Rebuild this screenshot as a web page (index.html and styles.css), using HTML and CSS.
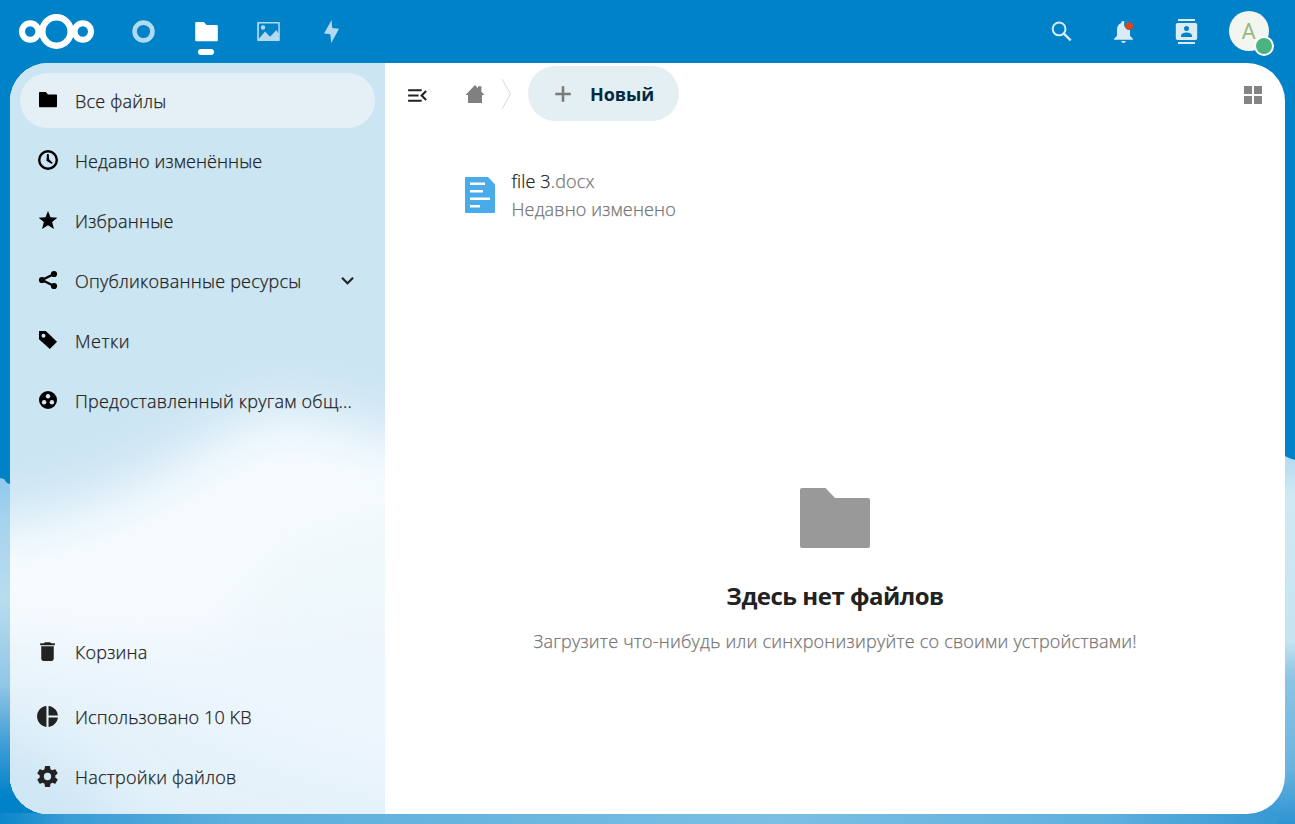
FILE: index.html
```html
<!DOCTYPE html>
<html lang="ru">
<head>
<meta charset="utf-8">
<title>Файлы</title>
<link rel="stylesheet" href="styles.css">
</head>
<body>
<svg class="sky" viewBox="0 0 1295 824" aria-hidden="true">
  <defs>
    <linearGradient id="skyLeft" x1="0" y1="478" x2="0" y2="824" gradientUnits="userSpaceOnUse">
      <stop offset="0" stop-color="#8fcaed"/><stop offset=".12" stop-color="#a6d3ed"/><stop offset=".35" stop-color="#b8ddef"/><stop offset=".6" stop-color="#90c6e6"/><stop offset=".76" stop-color="#43a0d8"/><stop offset=".92" stop-color="#0082c9"/>
    </linearGradient>
    <linearGradient id="skyRight" x1="0" y1="457" x2="0" y2="824" gradientUnits="userSpaceOnUse">
      <stop offset="0" stop-color="#b3daf0"/><stop offset=".1" stop-color="#d0e8f4"/><stop offset=".5" stop-color="#c6e3f1"/><stop offset=".6" stop-color="#8cc5e5"/><stop offset=".85" stop-color="#69b3e0"/><stop offset="1" stop-color="#2d93d1"/>
    </linearGradient>
    <linearGradient id="skyBottom" x1="0" y1="0" x2="1295" y2="0" gradientUnits="userSpaceOnUse">
      <stop offset="0" stop-color="#0a86cb"/><stop offset=".05" stop-color="#389cd5"/><stop offset=".18" stop-color="#5dafdd"/><stop offset=".35" stop-color="#66b5df"/><stop offset=".6" stop-color="#7bbfe4"/><stop offset=".85" stop-color="#5fb0de"/><stop offset="1" stop-color="#3396d2"/>
    </linearGradient>
  </defs>
  <path fill="url(#skyLeft)" d="M0 478l4 1 3 4 3 1 40 0v330H0z"/>
  <path fill="url(#skyRight)" d="M1245 456h40l4 2 6 2v364h-18l-32-10z"/>
  <path fill="url(#skyBottom)" d="M0 813h1285l-8 11H0z"/>
</svg>
<header class="header">
  <a class="logo"><svg width="76" height="38" viewBox="0 0 76 38" fill="none" stroke="#fff"><circle cx="38.500" cy="19.500" r="14.2" stroke-width="6.500"/><circle cx="12.200" cy="19.500" r="8.200" stroke-width="6"/><circle cx="64.800" cy="19.500" r="8.200" stroke-width="6"/></svg></a>
  <nav class="apps">
    <a class="app"><svg width="25" height="25" viewBox="0 0 25 25"><circle cx="12.5" cy="12.5" r="8.9" fill="none" stroke="#fff" stroke-width="4.6"/></svg></a>
    <a class="app app-active"><svg width="25" height="25" viewBox="0 0 25 25" fill="#fff"><path d="M2.2 3h7.6l2.8 3h10.2a1 1 0 0 1 1 1v14.200a1 1 0 0 1-1 1H2.2a1 1 0 0 1-1-1V4a1 1 0 0 1 1-1z"/></svg></a>
    <a class="app"><svg width="25" height="25" viewBox="0 0 25 25" fill="#fff"><path fill-rule="evenodd" d="M2 3h21a.8.8 0 0 1 .8.8v17.5a.8.8 0 0 1-.8.8H2a.8.8 0 0 1-.8-.8V3.8A.8.8 0 0 1 2 3zm.9 1.5v15.3l6.2-7.3 5 5.2 6.3-6.7 1.9 3.2V4.500z"/><circle cx="7" cy="8.500" r="2.200"/></svg></a>
    <a class="app"><svg width="25" height="25" viewBox="0 0 25 25" fill="#fff"><path d="M12.600 1 5 14.500l6.300.7L12.300 24 20 9.800l-6.800-.8z"/></svg></a>
  </nav>
  <div class="tools">
    <a class="tool"><svg width="25" height="25" viewBox="0 0 25 25" fill="none" stroke="#fff"><circle cx="10.100" cy="9.900" r="6.400" stroke-width="2"/><path stroke-width="2.400" d="m14.600 14.300 7.100 7.100"/></svg></a>
    <a class="tool"><svg width="25" height="25" viewBox="0 0 25 25"><path fill="#fff" d="M12 2c-1.100 0-1.700.7-1.700 2C7.500 5 6 7.500 6 10.500v6.200L3.100 19.800v.9h18.800v-.9L19 16.700v-5.600a6 6 0 0 1-5.500-8.300C13.200 2.200 12.700 2 12 2zM10.200 22c.2 1.200 1 1.900 2.300 1.900s2.100-.7 2.300-1.900z"/><circle cx="18.200" cy="7" r="3.800" fill="#ff3d00"/></svg></a>
    <a class="tool"><svg width="25" height="25" viewBox="0 0 25 25" fill="#fff"><path fill-rule="evenodd" d="M4 0h17v2H4zm0 23h17v2H4zM3.500 4h18a1.700 1.700 0 0 1 1.700 1.700v13.600a1.700 1.700 0 0 1-1.700 1.700h-18a1.700 1.700 0 0 1-1.700-1.700V5.700A1.700 1.700 0 0 1 3.500 4zm9 3a2.500 2.500 0 1 0 0 5 2.500 2.500 0 0 0 0-5zm-5.400 11h10.800v-1.400c0-1.800-3-3-5.400-3s-5.400 1.200-5.400 3z"/></svg></a>
    <a class="user"><span class="avatar">A</span><i class="status"></i></a>
  </div>
</header>
<main class="content">
  <aside class="sidebar">
    <svg class="haze" viewBox="0 0 375 751" aria-hidden="true">
      <defs>
        <filter id="soft" x="-40%" y="-40%" width="180%" height="180%"><feGaussianBlur stdDeviation="28"/></filter>
      </defs>
      <path fill="#f6fbfe" filter="url(#soft)" d="M-80 465C20 465 90 440 150 408S250 340 295 350 390 380 460 390V850H-80z"/>
      <path fill="#edf5fd" filter="url(#soft)" d="M-80 565C60 570 160 600 240 560S390 520 470 510V860H-80z"/>
      <path fill="#eff8fb" filter="url(#soft)" d="M250 500 460 420V560L250 580z"/>
      <path fill="#e4f2fa" filter="url(#soft)" d="M-80 600C20 610 120 630 220 675S390 715 460 750V880H-80z"/>
      <path fill="#cfe6f5" filter="url(#soft)" d="M-80 650C0 665 60 690 100 740S220 790 260 800V880H-80z"/>
    </svg>
    <ul class="nav">
      <li class="item item-active"><svg class="icon" viewBox="0 0 20 20"><path d="M1.800 2h6l2.200 2.400h8.200c.5 0 .8.300.8.800v11.300c0 .5-.3.800-.8.800H1.800c-.5 0-.8-.3-.8-.8V2.800c0-.5.3-.8.8-.8z"/></svg><span>Все файлы</span></li>
      <li class="item"><svg class="icon" viewBox="0 0 20 20"><circle cx="10" cy="10" r="8.800" fill="none" stroke="#000" stroke-width="2.400"/><path d="M9 4h1.700l.5 5.500 3.600 3.300-1 1.300L8.400 10.700z"/></svg><span class="snug">Недавно изменённые</span></li>
      <li class="item"><svg class="icon" viewBox="0 0 20 20"><path d="m10 1 2.500 6.200 6.900.5-5.300 4.400 1.900 7L10 15.300 4 19.100l1.900-7L.6 7.700l6.900-.5z"/></svg><span>Избранные</span></li>
      <li class="item"><svg class="icon" viewBox="0 0 20 20"><path fill="none" stroke="#000" stroke-width="2.300" d="M16 4 4 10l12 6"/><circle cx="16" cy="4" r="3.100"/><circle cx="4" cy="10" r="3.100"/><circle cx="16" cy="16" r="3.100"/></svg><span>Опубликованные ресурсы</span><svg class="chevron" viewBox="0 0 24 24"><path d="M7.410 8.580 12 13.170l4.590-4.590L18 10l-6 6-6-6z"/></svg></li>
      <li class="item"><svg class="icon" viewBox="0 0 20 20"><path fill-rule="evenodd" d="M1 1h6.800L19 11.800 11.800 19 1 9.200zm4.500 2.700a2 2 0 1 0 0 4 2 2 0 0 0 0-4z"/></svg><span class="loose">Метки</span></li>
      <li class="item"><svg class="icon" viewBox="0 0 20 20"><circle cx="10" cy="10" r="9"/><g fill="#d4e9f5"><circle cx="10" cy="6.200" r="2.200"/><circle cx="6.100" cy="12.200" r="2.200"/><circle cx="13.900" cy="12.200" r="2.200"/></g></svg><span>Предоставленный кругам общ...</span></li>
    </ul>
    <ul class="nav nav-bottom">
      <li class="item trash"><svg class="icon-lg" viewBox="0 0 24 24"><path d="M19 4h-3.500l-1-1h-5l-1 1H5v2h14M6 19a2 2 0 0 0 2 2h8a2 2 0 0 0 2-2V7H6z"/></svg><span>Корзина</span></li>
      <li class="item"><svg class="icon-lg" viewBox="0 0 24 24"><path d="M11 2v20C5.900 21.500 2 17.200 2 12s3.900-9.500 9-10m2 0v9h9c-.5-4.800-4.200-8.500-9-9m0 11v9c4.700-.5 8.500-4.200 9-9z"/></svg><span class="snug">Использовано 10 KB</span></li>
      <li class="item"><svg class="icon-lg" viewBox="0 0 24 24"><path d="M12 15.500A3.500 3.500 0 0 1 8.500 12 3.500 3.500 0 0 1 12 8.500a3.500 3.500 0 0 1 3.500 3.500 3.500 3.500 0 0 1-3.500 3.500m7.430-2.530c.04-.32.07-.64.07-.97s-.03-.66-.07-1l2.110-1.630c.19-.15.24-.42.12-.64l-2-3.460c-.12-.22-.39-.31-.61-.22l-2.490 1c-.52-.39-1.060-.73-1.690-.98l-.37-2.650A.506.506 0 0 0 14 2h-4c-.25 0-.46.18-.5.420l-.37 2.650c-.63.250-1.170.590-1.690.980l-2.490-1c-.22-.09-.49 0-.61.220l-2 3.460c-.13.220-.07.490.12.640L4.570 11c-.04.340-.07.670-.07 1s.03.650.07.970l-2.110 1.660c-.19.150-.25.420-.12.640l2 3.460c.12.220.390.300.610.220l2.490-1.010c.52.400 1.060.740 1.690.990l.37 2.650c.04.240.25.420.5.420h4c.25 0 .46-.18.5-.420l.37-2.650c.63-.26 1.170-.59 1.690-.99l2.490 1.010c.22.080.49 0 .61-.22l2-3.460c.12-.22.070-.49-.12-.640z"/></svg><span>Настройки файлов</span></li>
    </ul>
  </aside>
  <section class="files">
    <div class="toolbar">
      <svg class="toggle" viewBox="0 0 24 24"><path d="M21 15.610 19.590 17l-5.010-5 5.010-5L21 8.390 17.440 12zM3 6h13v2H3zm0 7v-2h10v2zm0 5v-2h13v2z"/></svg>
      <svg class="home" viewBox="0 0 20 20"><path d="M10 1 .5 11H3v8h14v-8h2.500L16.400 7.700V2.200H13v2z"/></svg>
      <svg class="crumb" viewBox="0 0 12 32"><path fill="none" stroke="#d8d8d8" d="m1 1 8.500 15L1 31"/></svg>
      <button class="new"><svg viewBox="0 0 24 24"><path d="M19.200 13.200h-6v6h-2.400v-6h-6v-2.400h6v-6h2.400v6h6z"/></svg><span>Новый</span></button>
      <svg class="grid" viewBox="0 0 18 18"><path d="M0 0h8v8H0zm10 0h8v8h-8zM0 10h8v8H0zm10 0h8v8h-8z"/></svg>
    </div>
    <div class="file">
      <svg class="doc" viewBox="0 0 30 36"><path fill="#49abea" d="M1 0h22l7 7.500V35a1 1 0 0 1-1 1H1a1 1 0 0 1-1-1V1a1 1 0 0 1 1-1z"/><path fill="#fff" d="M5 5.500h15V8H5zm0 7.500h13v2.500H5zm0 7.500h20V23H5zm0 7.500h10v2.500H5z"/></svg>
      <div class="meta"><div class="name">file 3<span>.docx</span></div><div class="recent">Недавно изменено</div></div>
    </div>
    <div class="empty">
      <svg viewBox="0 0 70 60"><path d="M2 0h23.500l9.500 10h33a2 2 0 0 1 2 2v46a2 2 0 0 1-2 2H2a2 2 0 0 1-2-2V2a2 2 0 0 1 2-2z"/></svg>
      <h2>Здесь нет файлов</h2>
      <p>Загрузите что-нибудь или синхронизируйте со своими устройствами!</p>
    </div>
  </section>
</main>
</body>
</html>
```
FILE: styles.css
```css
* { box-sizing: border-box; }
body {
  margin: 0;
  height: 824px;
  overflow: hidden;
  background: #0082c9;
  font: 300 18px/28px "Open Sans", "Noto Sans", sans-serif;
  letter-spacing: .22px;
  -webkit-text-stroke: .25px;
  color: #222;
}
svg { display: block; flex: none; }
.sky { position: absolute; inset: 0; width: 1295px; height: 824px; z-index: -1; }

.header { display: flex; height: 63px; align-items: center; padding: 0 15px 0 18px; }
.logo { width: 94.500px; padding-bottom: 1px; }
.apps, .tools { display: flex; }
.tools { margin-left: auto; }
.app, .tool { display: flex; flex-direction: column; width: 62.500px; height: 63px; align-items: center; justify-content: center; }
.app svg { opacity: .7; }
.app-active svg { opacity: 1; }
.app-active { padding-top: 19px; justify-content: flex-start; }
.app-active::after { content: ""; width: 16px; height: 6px; margin-top: 5px; border-radius: 3px; background: #fff; }
.tool svg { opacity: .85; }
.user { display: flex; position: relative; width: 62.500px; height: 62px; align-items: center; justify-content: center; }
.avatar { width: 40px; height: 40px; border-radius: 50%; background: #f3f6f0; color: #9aba82; font: 400 22px/42px Roboto, sans-serif; -webkit-text-stroke: 0; text-align: center; }
.status { position: absolute; left: 36.500px; top: 36px; width: 20px; height: 20px; border: 2px solid #fff; border-radius: 50%; background: #49b382; }

.content { display: flex; width: 1275px; height: 751px; margin: 0 10px; border-radius: 38px; overflow: hidden; background: #fff; }
.sidebar { position: relative; display: flex; flex-direction: column; justify-content: space-between; width: 375px; padding: 10px 10px 9px; background: #cce5f3; }
.haze { position: absolute; inset: 0; width: 375px; height: 751px; }
.nav { position: relative; display: flex; flex-direction: column; gap: 5px; margin: 0; padding: 0; list-style: none; }
.item { display: flex; height: 55px; align-items: center; border-radius: 28px; white-space: nowrap; }
.item-active { background: #e4f0f5; }
.nav-bottom .trash { margin-bottom: 5px; }
.nav-bottom span { padding-bottom: 1px; }
.snug { letter-spacing: .11px; }
.loose { letter-spacing: .5px; }
.icon { width: 20px; height: 20px; margin: 0 17px 1px 18px; fill: #000; }
.icon-lg { width: 25px; height: 25px; margin: 0 15px 2px; fill: #222; }
.chevron { width: 25px; height: 25px; margin: 0 15px 0 auto; fill: #222; }

.files { width: 900px; }
.toolbar { display: flex; height: 61px; align-items: center; padding: 0 23px 0 20px; }
.toggle { width: 25px; height: 25px; margin: 4px 35px 0 0; fill: #222; }
.home { width: 20px; height: 20px; margin-right: 16px; fill: #808080; }
.crumb { width: 12px; height: 32px; margin-right: 15px; }
.new { display: flex; align-items: center; width: 151px; height: 55px; padding: 0 0 0 22px; border: 0; border-radius: 28px; background: #e4eff4; color: #002a41; font: 700 18px/28px "Open Sans", "Noto Sans", sans-serif; letter-spacing: -.1px; -webkit-text-stroke: 0; }
.new svg { width: 26px; height: 26px; margin-right: 14px; fill: #7a7a7a; }
.grid { width: 18px; height: 18px; margin: 3px 0 0 auto; fill: #848484; }

.file { display: flex; align-items: center; gap: 16.500px; height: 58px; margin: 42px 0 0 80px; letter-spacing: .15px; }
.doc { width: 30px; height: 36px; }
.name span, .recent { color: #767676; }

.empty { display: flex; flex-direction: column; align-items: center; margin-top: 264px; }
.empty svg { width: 70px; height: 60px; fill: #999; }
.empty h2 { margin: 30px 0 0; font: 700 24px/36px "Open Sans", "Noto Sans", sans-serif; letter-spacing: -.5px; -webkit-text-stroke: 0; }
.empty p { margin: 13px 0 0; color: #767676; white-space: nowrap; }
```
